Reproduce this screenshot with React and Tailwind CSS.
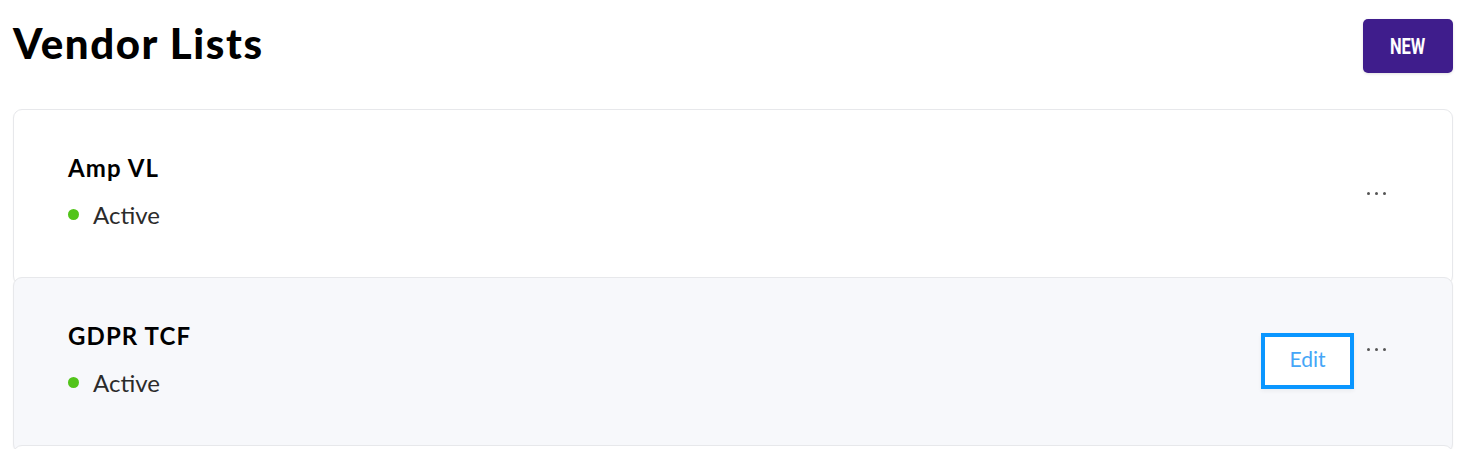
import React from 'react'

function Dots() {
  return (
    <div className="w-8 h-8 flex items-center justify-center gap-[5px] shrink-0">
      <span className="w-[3px] h-[3px] rounded-full bg-[#555]" />
      <span className="w-[3px] h-[3px] rounded-full bg-[#555]" />
      <span className="w-[3px] h-[3px] rounded-full bg-[#555]" />
    </div>
  )
}

function VendorCard({ name, status, selected }) {
  return (
    <div
      className={`relative -mt-2 first:mt-0 h-[176px] pb-2 rounded-[9px] border border-[#e7e8eb] shadow-[0_1px_2px_rgba(0,0,0,0.04)] flex items-center justify-between pl-[54px] pr-[60px] ${selected ? 'bg-[#f7f8fb]' : 'bg-white'}`}
    >
      <div className="flex flex-col gap-[18px] -mt-[5px]">
        <div className="text-[24px] leading-[29px] font-bold text-black tracking-[1.1px]">{name}</div>
        <div className="flex items-center gap-[14px] text-[24px] leading-[29px] text-[#2b2b2b]">
          <span className="w-[11px] h-[11px] rounded-full bg-[#52c41a] mt-[1px]" />
          <span>{status}</span>
        </div>
      </div>
      <div className="flex items-start gap-[6px]">
        {selected && (
          <button className="w-[93px] h-[56px] pb-[5px] border-4 border-[#0a96ff] bg-white text-[21px] text-[#45a6f7] flex items-center justify-center shadow-[0_2px_4px_rgba(0,0,0,0.05)]">
            Edit
          </button>
        )}
        <Dots />
      </div>
    </div>
  )
}

export default function App() {
  return (
    <div className="w-[1463px] h-[449px] overflow-hidden bg-white pl-[13px] pr-[10px] pt-[18px] font-['Lato',sans-serif]">
      <div className="flex items-start justify-between h-[91px]">
        <h1 className="text-[42px] leading-[50px] font-black text-black tracking-[1.6px]">Vendor Lists</h1>
        <button className="mt-px w-[90px] h-[54px] rounded-[5px] bg-[#3f1d8c] shadow-[0_1px_3px_rgba(0,0,0,0.12)] flex items-center justify-center">
          <span className="font-['Roboto',sans-serif] font-bold text-[22px] text-white scale-x-75 inline-block">NEW</span>
        </button>
      </div>
      <div className="flex flex-col">
        <VendorCard name="Amp VL" status="Active" />
        <VendorCard name="GDPR TCF" status="Active" selected />
        <VendorCard name="" status="" />
      </div>
    </div>
  )
}
